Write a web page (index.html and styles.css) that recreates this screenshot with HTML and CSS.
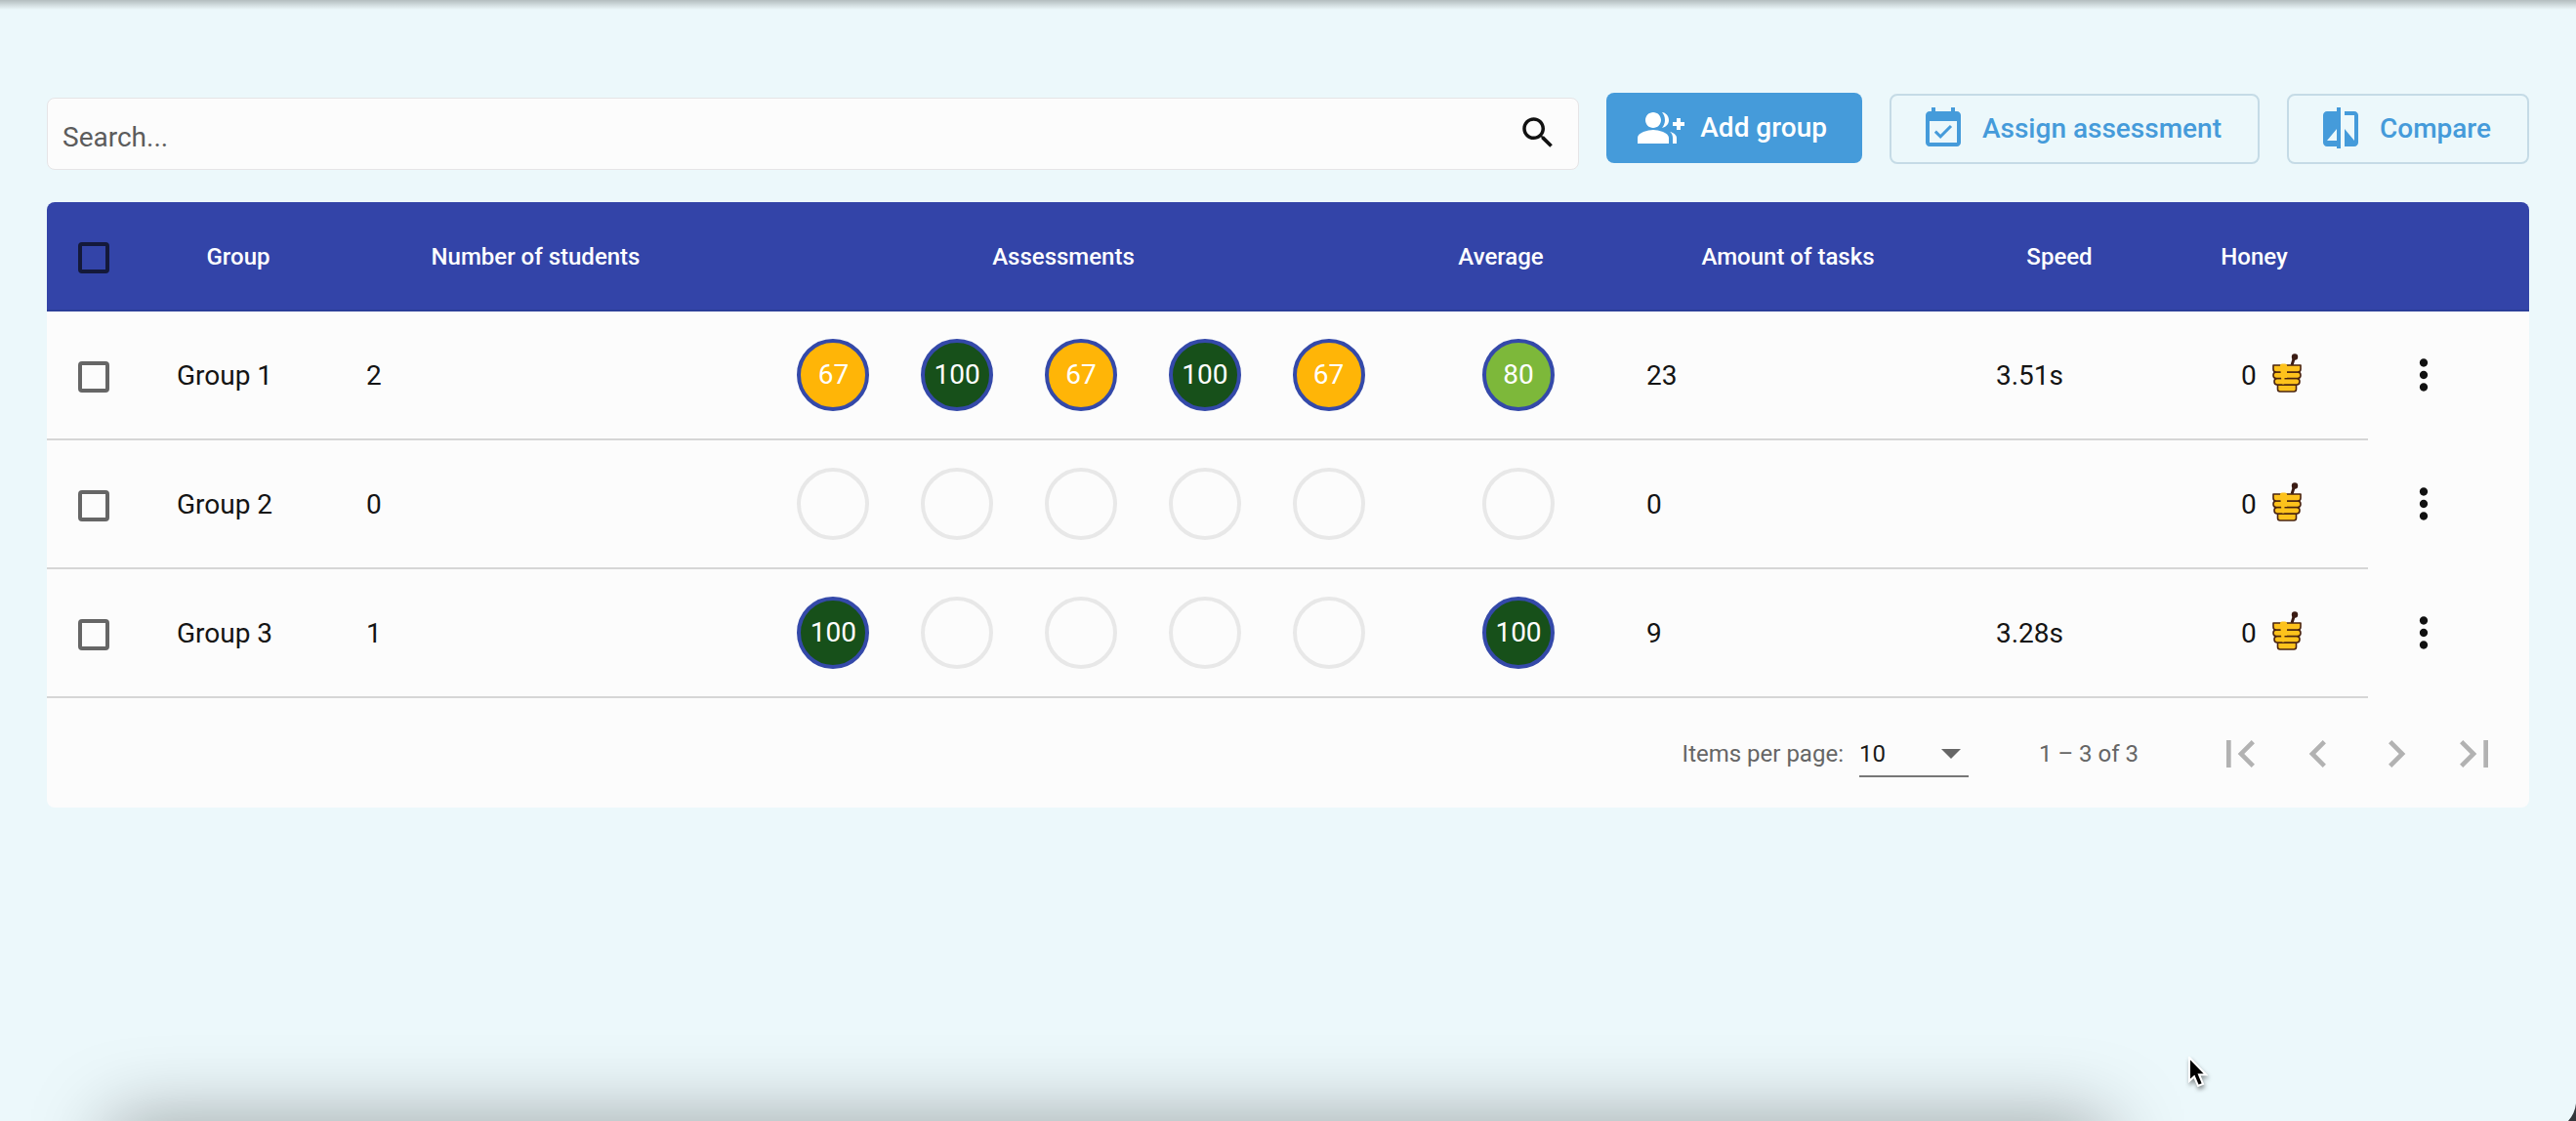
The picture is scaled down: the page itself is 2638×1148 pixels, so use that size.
FILE: index.html
```html
<!DOCTYPE html>
<html lang="en">
<head>
<meta charset="utf-8">
<meta name="viewport" content="width=device-width, initial-scale=1">
<title>Groups</title>
<link rel="stylesheet" href="styles.css">
</head>
<body>
<svg class="sprite" aria-hidden="true">
  <symbol id="honey" viewBox="0 0 30 40">
    <path d="M20 12 22.500 4" stroke="#3b1c14" stroke-width="3" fill="none"/>
    <circle cx="23" cy="3.500" r="3.200" fill="#3b1c14"/>
    <g fill="#fdc21c" stroke="#4a2410" stroke-width="1.600" stroke-linejoin="round">
      <path d="M5.500 32h19v4.500q0 2.500-2.500 2.500H8q-2.500 0-2.500-2.500z"/>
      <path d="M5 25.500h20q3 0 3 3.300 0 3.200-3 3.200H5q-3 0-3-3.200 0-3.300 3-3.300z"/>
      <path d="M4 19h22q3 0 3 3.300 0 3.200-3 3.200H4q-3 0-3-3.200Q1 19 4 19z"/>
      <path d="M1 12h28v4q0 3-3 3H4q-3 0-3-3z"/>
    </g>
    <path d="M8 12q0-1.500 2-1.500h3q2 0 2 1.500v13h-2.500v6q-2.500 1.500-3-1z" fill="#fdc21c"/>
  </symbol>
  <symbol id="more" viewBox="0 0 24 24">
    <path d="M12 8c1.100 0 2-.9 2-2s-.9-2-2-2-2 .9-2 2 .9 2 2 2zm0 2c-1.100 0-2 .9-2 2s.9 2 2 2 2-.9 2-2-.9-2-2-2zm0 6c-1.100 0-2 .9-2 2s.9 2 2 2 2-.9 2-2-.9-2-2-2z"/>
  </symbol>
</svg>

<main class="page">
  <div class="toolbar">
    <label class="search">
      <input class="search-input" type="text" placeholder="Search..." aria-label="Search">
      <svg class="search-icon" viewBox="0 0 24 24"><path d="M15.500 14h-.79l-.28-.27C15.410 12.590 16 11.110 16 9.500 16 5.910 13.090 3 9.500 3S3 5.910 3 9.500 5.910 16 9.500 16c1.610 0 3.090-.59 4.230-1.570l.27.28v.79l5 4.990L20.490 19l-4.990-5zm-6 0C7.010 14 5 11.990 5 9.500S7.010 5 9.500 5 14 7.010 14 9.500 11.990 14 9.500 14z"/></svg>
    </label>
    <button class="btn btn-primary" type="button">
      <svg class="btn-icon" viewBox="0 0 24 24"><path d="M22 9V7h-2v2h-2v2h2v2h2v-2h2V9zM8 12c2.210 0 4-1.790 4-4s-1.790-4-4-4-4 1.790-4 4 1.790 4 4 4zm0 1c-2.670 0-8 1.340-8 4v3h16v-3c0-2.660-5.330-4-8-4zM12.510 4.050C13.430 5.110 14 6.490 14 8s-.57 2.890-1.490 3.950C14.470 11.700 16 10.040 16 8s-1.530-3.700-3.490-3.950zm4.020 9.780C17.420 14.660 18 15.700 18 17v3h2v-3c0-1.450-1.590-2.510-3.470-3.170z"/></svg>
      <span>Add group</span>
    </button>
    <button class="btn btn-outline" type="button">
      <svg class="btn-icon" viewBox="0 0 24 24"><path d="M16.530 11.060L15.470 10l-4.880 4.880-2.120-2.120-1.060 1.060L10.590 17l5.940-5.940zM19 3h-1V1h-2v2H8V1H6v2H5c-1.110 0-1.990.9-1.990 2L3 19c0 1.100.89 2 2 2h14c1.100 0 2-.9 2-2V5c0-1.100-.9-2-2-2zm0 16H5V8h14v11z"/></svg>
      <span>Assign assessment</span>
    </button>
    <button class="btn btn-outline" type="button">
      <svg class="btn-icon" viewBox="0 0 24 24"><path d="M10 3H5c-1.100 0-2 .9-2 2v14c0 1.100.9 2 2 2h5v1h2V1h-2v2zm0 15H5l5-6v6zm9-15h-5v2h5v13l-5-6v9h5c1.100 0 2-.9 2-2V5c0-1.100-.9-2-2-2z"/></svg>
      <span>Compare</span>
    </button>
  </div>

  <section class="card">
    <table class="groups">
      <colgroup>
        <col class="col-check"><col class="col-group"><col class="col-students"><col class="col-scores"><col class="col-average"><col class="col-tasks"><col class="col-speed"><col class="col-honey"><col class="col-menu">
      </colgroup>
      <thead>
        <tr>
          <th class="check"><input class="box" type="checkbox" aria-label="Select all groups"></th>
          <th>Group</th>
          <th>Number of students</th>
          <th>Assessments</th>
          <th>Average</th>
          <th>Amount of tasks</th>
          <th>Speed</th>
          <th class="honey-head">Honey</th>
          <th></th>
        </tr>
      </thead>
      <tbody>
        <tr>
          <td class="check"><input class="box" type="checkbox" aria-label="Select Group 1"></td>
          <td>Group 1</td>
          <td class="inset">2</td>
          <td class="flush"><div class="scores"><span class="score mid">67</span><span class="score top">100</span><span class="score mid">67</span><span class="score top">100</span><span class="score mid">67</span></div></td>
          <td class="flush"><div class="scores"><span class="score good">80</span></div></td>
          <td>23</td>
          <td class="inset">3.51s</td>
          <td><div class="honey"><span>0</span><svg class="honey-icon"><use href="#honey"/></svg></div></td>
          <td class="flush menu"><button class="icon-btn" type="button" aria-label="Group 1 actions"><svg class="more-icon"><use href="#more"/></svg></button></td>
        </tr>
        <tr>
          <td class="check"><input class="box" type="checkbox" aria-label="Select Group 2"></td>
          <td>Group 2</td>
          <td class="inset">0</td>
          <td class="flush"><div class="scores"><span class="score"></span><span class="score"></span><span class="score"></span><span class="score"></span><span class="score"></span></div></td>
          <td class="flush"><div class="scores"><span class="score"></span></div></td>
          <td>0</td>
          <td class="inset"></td>
          <td><div class="honey"><span>0</span><svg class="honey-icon"><use href="#honey"/></svg></div></td>
          <td class="flush menu"><button class="icon-btn" type="button" aria-label="Group 2 actions"><svg class="more-icon"><use href="#more"/></svg></button></td>
        </tr>
        <tr>
          <td class="check"><input class="box" type="checkbox" aria-label="Select Group 3"></td>
          <td>Group 3</td>
          <td class="inset">1</td>
          <td class="flush"><div class="scores"><span class="score top">100</span><span class="score"></span><span class="score"></span><span class="score"></span><span class="score"></span></div></td>
          <td class="flush"><div class="scores"><span class="score top">100</span></div></td>
          <td>9</td>
          <td class="inset">3.28s</td>
          <td><div class="honey"><span>0</span><svg class="honey-icon"><use href="#honey"/></svg></div></td>
          <td class="flush menu"><button class="icon-btn" type="button" aria-label="Group 3 actions"><svg class="more-icon"><use href="#more"/></svg></button></td>
        </tr>
      </tbody>
    </table>

    <div class="paginator">
      <label class="page-size">
        <span>Items per page:</span>
        <span class="select-wrap">
          <select class="select"><option>10</option><option>25</option><option>50</option></select>
          <svg class="caret" viewBox="0 0 20 10"><path d="M0 0h20L10 10z"/></svg>
        </span>
      </label>
      <span class="range">1 – 3 of 3</span>
      <div class="pages">
        <button class="page-btn" type="button" disabled aria-label="First page"><svg class="page-icon" viewBox="0 0 24 24"><path d="M18.410 16.590L13.820 12l4.590-4.590L17 6l-6 6 6 6zM6 6h2v12H6z"/></svg></button>
        <button class="page-btn" type="button" disabled aria-label="Previous page"><svg class="page-icon" viewBox="0 0 24 24"><path d="M15.410 7.410L14 6l-6 6 6 6 1.410-1.410L10.830 12z"/></svg></button>
        <button class="page-btn" type="button" disabled aria-label="Next page"><svg class="page-icon" viewBox="0 0 24 24"><path d="M10 6L8.590 7.410 13.170 12l-4.580 4.590L10 18l6-6z"/></svg></button>
        <button class="page-btn" type="button" disabled aria-label="Last page"><svg class="page-icon" viewBox="0 0 24 24"><path d="M5.590 7.410L10.180 12l-4.590 4.590L7 18l6-6-6-6zM16 6h2v12h-2z"/></svg></button>
      </div>
    </div>
  </section>
</main>

<div class="edge-bottom" aria-hidden="true"></div>
<svg class="corner" viewBox="0 0 8 18" aria-hidden="true"><path d="M8 0v18H0Q7 10 8 0z" fill="#33363a"/></svg>
<svg class="pointer" viewBox="0 0 20 34" aria-hidden="true"><path d="M1 1v24l5-4.500 4 9.500 5-2-4-9.500h7z" fill="#000" stroke="#fff" stroke-width="2"/></svg>
</body>
</html>
```
FILE: styles.css
```css
* {
  box-sizing: border-box;
}

body {
  margin: 0;
  min-height: 100vh;
  position: relative;
  overflow: hidden;
  background: linear-gradient(rgba(0, 0, 0, 0.24), rgba(0, 0, 0, 0)) 0 0 / 100% 10px no-repeat #ecf8fb;
  color: #141414;
  font: 400 28px/32px Roboto, "Liberation Sans", sans-serif;
}

button,
input,
select {
  font: inherit;
  color: inherit;
}

.sprite {
  position: absolute;
  width: 0;
  height: 0;
}

.page {
  padding: 95px 48px 0;
}

/* Toolbar */
.toolbar {
  display: flex;
  align-items: flex-start;
  gap: 28px;
}

.search {
  flex: 1;
  display: flex;
  align-items: center;
  height: 74px;
  margin-top: 5px;
  padding: 8px 20px 0 15px;
  border: 1px solid #e6e4e6;
  border-radius: 8px;
  background: #fcfcfc;
}

.search-input {
  flex: 1;
  min-width: 0;
  padding: 0;
  border: 0;
  outline: 0;
  background: none;
}

.search-input::placeholder {
  color: #5c5c5c;
  opacity: 1;
}

.search-icon {
  width: 42px;
  height: 42px;
  margin-bottom: 10px;
  fill: #111;
}

.btn {
  display: flex;
  align-items: center;
  gap: 16px;
  height: 72px;
  border-radius: 8px;
  padding: 0 36px 0 32px;
  border: 0;
  font-weight: 500;
  white-space: nowrap;
}

.btn-primary {
  background: #459bda;
  color: #fff;
}

.btn-outline {
  margin-top: 1px;
  padding: 0 37px 0 29px;
  border: 2px solid #c5dbe6;
  background: none;
  color: #459bda;
}

.btn-icon {
  width: 48px;
  height: 48px;
  fill: currentColor;
}

/* Table card */
.card {
  margin-top: 33px;
  border-radius: 8px;
  overflow: hidden;
  background: #fcfcfc;
}

.groups {
  width: 100%;
  table-layout: fixed;
  border-collapse: separate;
  border-spacing: 0;
}

.col-check { width: 133px; }
.col-group { width: 162px; }
.col-students { width: 447px; }
.col-scores { width: 634px; }
.col-average { width: 262px; }
.col-tasks { width: 326px; }
.col-speed { width: 230px; }
.col-honey { width: 183px; }
.col-menu { width: 165px; }

th {
  height: 112px;
  padding: 2px 36px 0 0;
  border-bottom: 2px solid #2c3f99;
  background: #3344a8;
  color: #fff;
  font-size: 24px;
  font-weight: 500;
  text-align: center;
  white-space: nowrap;
}

.honey-head {
  padding-right: 50px;
}

td {
  height: 132px;
  padding: 2px 0 0;
  border-bottom: 2px solid #d6d6d6;
}

td:last-child {
  border-bottom: 0;
}

.inset {
  padding-left: 32px;
}

.flush {
  padding-top: 0;
}

.check {
  padding: 4px 0 0 32px;
  text-align: left;
}

.box {
  appearance: none;
  display: block;
  width: 32px;
  height: 32px;
  margin: 0;
  border: 4px solid #666;
  border-radius: 4px;
}

th .box {
  border-color: #14193a;
}

.scores {
  display: flex;
  justify-content: space-around;
}

.score {
  display: flex;
  align-items: center;
  justify-content: center;
  width: 74px;
  height: 74px;
  border: 4px solid #e8e8e8;
  border-radius: 50%;
  color: #fff;
}

.mid,
.good,
.top {
  border-color: #3449a9;
}

.mid { background: #ffb507; }
.good { background: #7db83a; }
.top { background: #17501a; }

.honey {
  display: flex;
  align-items: center;
  gap: 16px;
  padding-left: 53px;
}

.honey-icon {
  width: 30px;
  height: 40px;
  margin-bottom: 6px;
}

.menu {
  padding-bottom: 2px;
  padding-left: 32px;
}

.icon-btn {
  display: block;
  padding: 0;
  border: 0;
  background: none;
}

.more-icon {
  display: block;
  width: 50px;
  height: 50px;
  fill: #111;
}

/* Paginator */
.paginator {
  display: flex;
  align-items: center;
  justify-content: flex-end;
  height: 112px;
  padding: 2px 16px 0 0;
  color: #666;
  font-size: 24px;
}

.page-size {
  display: flex;
  align-items: center;
  gap: 16px;
}

.select-wrap {
  position: relative;
}

.select {
  appearance: none;
  display: block;
  width: 112px;
  height: 48px;
  padding: 2px 0 0;
  border: 0;
  border-bottom: 2px solid #777;
  border-radius: 0;
  background: none;
  color: #1a1a1a;
}

.caret {
  position: absolute;
  top: 19px;
  right: 8px;
  width: 20px;
  height: 10px;
  fill: #666;
  pointer-events: none;
}

.range {
  margin: 0 64px 0 72px;
}

.pages {
  display: flex;
}

.page-btn {
  display: flex;
  align-items: center;
  justify-content: center;
  width: 80px;
  height: 80px;
  padding: 0;
  border: 0;
  background: none;
}

.page-icon {
  width: 56px;
  height: 56px;
  fill: #b2b2b2;
}

/* Overlays */
.edge-bottom {
  position: absolute;
  right: 19%;
  bottom: -60px;
  left: 5%;
  height: 40px;
  box-shadow: 0 0 80px 20px rgba(0, 0, 0, 0.36);
}

.corner {
  position: absolute;
  right: 0;
  bottom: 0;
  width: 8px;
  height: 18px;
}

.pointer {
  position: absolute;
  left: 2241px;
  top: 1082px;
  width: 20px;
  height: 34px;
  filter: drop-shadow(1px 3px 2px rgba(0, 0, 0, 0.4));
}
```
